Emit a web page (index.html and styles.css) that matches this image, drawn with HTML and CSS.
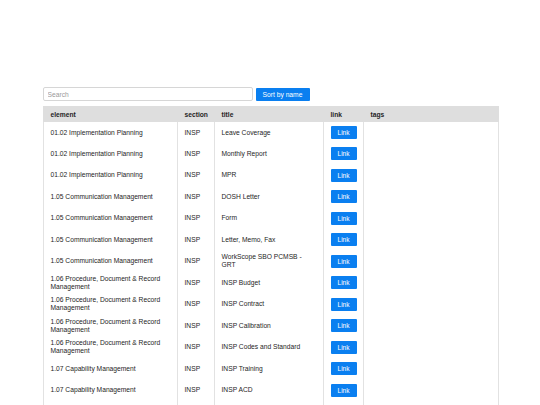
FILE: index.html
```html
<!DOCTYPE html>
<html>
<head>
<meta charset="utf-8">
<link rel="stylesheet" href="styles.css">
</head>
<body>
<div class="wrap">
  <div class="controls">
    <input class="search" type="text" placeholder="Search">
    <button class="sort">Sort by name</button>
  </div>
  <table class="grid">
    <colgroup>
      <col class="c-el"><col class="c-sec"><col class="c-title"><col class="c-link"><col class="c-tags">
    </colgroup>
    <thead>
      <tr><th>element</th><th>section</th><th>title</th><th>link</th><th>tags</th></tr>
    </thead>
    <tbody>
      <tr><td>01.02 Implementation Planning</td><td>INSP</td><td>Leave Coverage</td><td><a class="btn">Link</a></td><td></td></tr>
      <tr><td>01.02 Implementation Planning</td><td>INSP</td><td>Monthly Report</td><td><a class="btn">Link</a></td><td></td></tr>
      <tr><td>01.02 Implementation Planning</td><td>INSP</td><td>MPR</td><td><a class="btn">Link</a></td><td></td></tr>
      <tr><td>1.05 Communication Management</td><td>INSP</td><td>DOSH Letter</td><td><a class="btn">Link</a></td><td></td></tr>
      <tr><td>1.05 Communication Management</td><td>INSP</td><td>Form</td><td><a class="btn">Link</a></td><td></td></tr>
      <tr><td>1.05 Communication Management</td><td>INSP</td><td>Letter, Memo, Fax</td><td><a class="btn">Link</a></td><td></td></tr>
      <tr><td>1.05 Communication Management</td><td>INSP</td><td>WorkScope SBO PCMSB -<br>GRT</td><td><a class="btn">Link</a></td><td></td></tr>
      <tr><td>1.06 Procedure, Document &amp; Record<br>Management</td><td>INSP</td><td>INSP Budget</td><td><a class="btn">Link</a></td><td></td></tr>
      <tr><td>1.06 Procedure, Document &amp; Record<br>Management</td><td>INSP</td><td>INSP Contract</td><td><a class="btn">Link</a></td><td></td></tr>
      <tr><td>1.06 Procedure, Document &amp; Record<br>Management</td><td>INSP</td><td>INSP Calibration</td><td><a class="btn">Link</a></td><td></td></tr>
      <tr><td>1.06 Procedure, Document &amp; Record<br>Management</td><td>INSP</td><td>INSP Codes and Standard</td><td><a class="btn">Link</a></td><td></td></tr>
      <tr><td>1.07 Capability Management</td><td>INSP</td><td>INSP Training</td><td><a class="btn">Link</a></td><td></td></tr>
      <tr><td>1.07 Capability Management</td><td>INSP</td><td>INSP ACD</td><td><a class="btn">Link</a></td><td></td></tr>
      <tr><td></td><td></td><td></td><td><a class="btn">Link</a></td><td></td></tr>
    </tbody>
  </table>
</div>
</body>
</html>
```
FILE: styles.css
```css
html, body {
  margin: 0;
  padding: 0;
  background: #ffffff;
}
body {
  font-family: "Liberation Sans", Arial, sans-serif;
  font-size: 6.7px;
  color: #1e1e1e;
}
.wrap {
  width: 455px;
  margin: 87px auto 0;
}
.controls {
  display: flex;
  align-items: center;
  gap: 3px;
  height: 14px;
}
.search {
  box-sizing: border-box;
  width: 210px;
  height: 14px;
  margin: 0;
  padding: 0 4px;
  border: 1px solid #d6d6d6;
  border-radius: 2px;
  font-family: inherit;
  font-size: 6.7px;
  color: #333;
  outline: none;
}
.search::placeholder {
  color: #9a9a9a;
}
.sort {
  box-sizing: border-box;
  width: 54px;
  height: 13px;
  margin: 1px 0 0;
  padding: 0;
  border: none;
  border-radius: 1px;
  background: #0a7ff0;
  color: #fff;
  font-family: inherit;
  font-size: 6.7px;
}
.grid {
  width: 455px;
  margin-top: 5px;
  border-collapse: collapse;
  table-layout: fixed;
}
.c-el { width: 134px; }
.c-sec { width: 37px; }
.c-title { width: 109px; }
.c-link { width: 40px; }
.c-tags { width: 135px; }
.grid th {
  background: #dedede;
  height: 15px;
  padding: 0 7px;
  text-align: left;
  font-weight: bold;
  color: #1e1e1e;
  border: 1px solid #dedede;
  box-sizing: border-box;
}
.grid td {
  height: 21.5px;
  padding: 0 7px;
  line-height: 8px;
  vertical-align: middle;
  border-left: 1px solid #e2e2e2;
  border-right: 1px solid #e2e2e2;
  box-sizing: border-box;
}
.btn {
  display: inline-block;
  width: 26px;
  height: 13px;
  line-height: 13px;
  text-align: center;
  background: #0a7ff0;
  color: #fff;
  border-radius: 1px;
  font-size: 6.5px;
}
```
